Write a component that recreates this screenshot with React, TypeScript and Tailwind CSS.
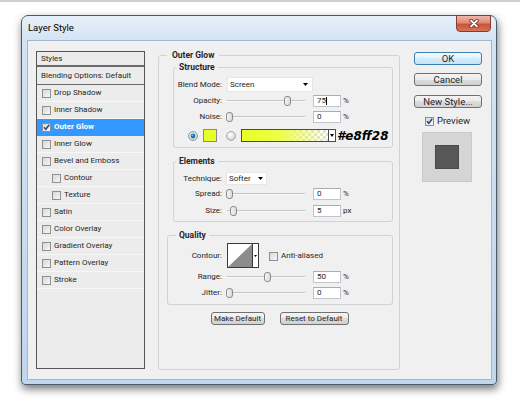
import React from "react";

function Tri({ w = 5, h = 3 }: { w?: number; h?: number }) {
  return (
    <svg width={w} height={h} viewBox={`0 0 ${w} ${h}`} className="block">
      <path d={`M0 0H${w}L${w / 2} ${h}Z`} fill="#000" />
    </svg>
  );
}

function Checkbox({ checked = false }: { checked?: boolean }) {
  return (
    <span className="relative inline-flex items-center justify-center w-[9px] h-[9px] border border-[#8e8f8f] bg-[linear-gradient(135deg,#d8d8d8,#f6f6f6)] shrink-0">
      {checked && (
        <svg width="9" height="9" viewBox="0 0 9 9" className="absolute -left-px -top-px">
          <path d="M2 4.3 L3.8 6.3 L7.2 1.8" stroke="#27477e" strokeWidth="1.5" fill="none" />
        </svg>
      )}
    </span>
  );
}

function Field({ value, caret = false }: { value: string; caret?: boolean }) {
  return (
    <div className="w-[28px] h-[12px] bg-white border border-[#c0c4cc] border-t-[#a8acb4] flex items-center pl-[3px] text-[8px] leading-none">
      {value}
      {caret && <span className="w-px h-[8px] bg-black" />}
    </div>
  );
}

function Slider({ thumb }: { thumb: number }) {
  return (
    <div className="relative w-[78px] h-full">
      <div className="absolute left-0 right-0 top-1/2 -mt-px h-[2px] bg-[#c4c4c4] border-b border-[#f8f8f8]" />
      <div
        className="absolute top-1/2 -mt-[5px] w-[7px] h-[10px] rounded-[3px] border border-[#8a8a8a] bg-[linear-gradient(to_right,#f6f6f6,#dadada)]"
        style={{ left: thumb }}
      />
    </div>
  );
}

function Label({ children, w = "w-[44px]" }: { children: React.ReactNode; w?: string }) {
  return (
    <span className={`${w} flex justify-end whitespace-nowrap text-[8px] leading-none shrink-0`}>{children}</span>
  );
}

function SliderRow({
  label,
  thumb,
  value,
  unit,
  caret,
  pad,
}: {
  label: string;
  thumb: number;
  value: string;
  unit: string;
  caret?: boolean;
  pad: string;
}) {
  return (
    <div className={`flex items-center h-[12px] ${pad}`}>
      <Label>{label}</Label>
      <div className="ml-[5px] h-full">
        <Slider thumb={thumb} />
      </div>
      <div className="ml-[8px]">
        <Field value={value} caret={caret} />
      </div>
      <span className="ml-[2px] text-[8px] leading-none">{unit}</span>
    </div>
  );
}

function Radio({ on = false }: { on?: boolean }) {
  return (
    <svg width="10" height="10" viewBox="0 0 10 10" className="block">
      <defs>
        <radialGradient id={on ? "rg1" : "rg2"} cx="0.4" cy="0.35" r="0.7">
          <stop offset="0" stopColor="#ffffff" />
          <stop offset="1" stopColor={on ? "#c8d8e4" : "#d2d2d2"} />
        </radialGradient>
      </defs>
      <circle cx="5" cy="5" r="4.4" fill={`url(#${on ? "rg1" : "rg2"})`} stroke={on ? "#6d8aa2" : "#9c9c9c"} strokeWidth="0.9" />
      {on && <circle cx="5" cy="5" r="2.4" fill="#1f6f9e" />}
      {on && <circle cx="4.4" cy="4.3" r="0.9" fill="#7fc2e6" />}
    </svg>
  );
}

function Group({
  title,
  children,
  className,
  legendClass,
}: {
  title: string;
  children: React.ReactNode;
  className: string;
  legendClass: string;
}) {
  return (
    <fieldset className={`border border-[#d2d2d2] rounded-[3px] p-0 m-0 ${className}`}>
      <legend className={`text-[8.5px] leading-[10px] font-bold ${legendClass}`}>{title}</legend>
      {children}
    </fieldset>
  );
}

function WinButton({
  label,
  w,
  def = false,
  h = "h-[13px]",
  text = "text-[9.5px]",
}: {
  label: string;
  w: string;
  def?: boolean;
  h?: string;
  text?: string;
}) {
  return (
    <div
      className={`${w} ${h} ${text} rounded-[3px] border flex items-center justify-center leading-none whitespace-nowrap ${
        def
          ? "border-[#3c7fb1] bg-[linear-gradient(to_bottom,#f1f9fe,#e2f2fc_50%,#d3ebfa_50%,#c4e4f8)]"
          : "border-[#707070] bg-[linear-gradient(to_bottom,#f4f4f4,#ebebeb_50%,#dddddd_50%,#d0d0d0)]"
      }`}
    >
      {label}
    </div>
  );
}

const items: { label: string; indent?: boolean; active?: boolean }[] = [
  { label: "Drop Shadow" },
  { label: "Inner Shadow" },
  { label: "Outer Glow", active: true },
  { label: "Inner Glow" },
  { label: "Bevel and Emboss" },
  { label: "Contour", indent: true },
  { label: "Texture", indent: true },
  { label: "Satin" },
  { label: "Color Overlay" },
  { label: "Gradient Overlay" },
  { label: "Pattern Overlay" },
  { label: "Stroke" },
];

function StylesPanel() {
  return (
    <div className="mt-[1px] w-[109px] h-[318px] border border-[#555] bg-[#ececec] flex flex-col text-[8px] leading-none shrink-0">
      <div className="h-[15px] flex items-center pl-[4px] border-b-2 border-[#6b6b6b]">Styles</div>
      <div className="h-[18px] flex items-center pl-[4px] border-b border-[#6b6b6b] whitespace-nowrap">
        Blending Options: Default
      </div>
      {items.map((it) => (
        <div
          key={it.label}
          className={`h-[17px] flex items-center gap-[3px] border-b ${
            it.active ? "bg-[#3399ff] text-white font-bold border-[#3399ff]" : "border-[#f7f7f7]"
          } ${it.indent ? "pl-[15px]" : "pl-[5px]"}`}
        >
          <Checkbox checked={it.active} />
          <span>{it.label}</span>
        </div>
      ))}
    </div>
  );
}

function OuterGlow() {
  return (
    <Group title="Outer Glow" className="ml-[13px] w-[242px] h-[320px] shrink-0" legendClass="ml-[8px] px-[5px]">
      <Group title="Structure" className="ml-[14px] mt-[2px] w-[220px] pb-[5px]" legendClass="ml-[2px] px-[3px]">
        <div className="flex items-center h-[15px] mt-[5px] pl-[4px]">
          <Label>Blend Mode:</Label>
          <div className="ml-[5px] w-[86px] h-full bg-white border border-[#e6e6e6] flex items-center justify-between pl-[2px] pr-[4px] text-[8px] leading-none">
            <span>Screen</span>
            <Tri />
          </div>
        </div>
        <div className="mt-[3px]">
          <SliderRow label="Opacity:" thumb={57} value="75" unit="%" caret pad="pl-[4px]" />
        </div>
        <div className="mt-[4px]">
          <SliderRow label="Noise:" thumb={-1} value="0" unit="%" pad="pl-[4px]" />
        </div>
        <div className="mt-[6px] h-[13px] flex items-center pl-[14px]">
          <Radio on />
          <div className="ml-[5px] w-[14px] h-[13px] bg-[#e8ff28] border border-[#8a8a8a]" />
          <div className="ml-[9px]">
            <Radio />
          </div>
          <div className="ml-[5px] h-[13px] flex border border-[#4a4a4a]">
            <div className="w-[86px] h-full bg-[repeating-conic-gradient(#dedede_0%_25%,#ffffff_0%_50%)] bg-[length:6px_6px]">
              <div className="w-full h-full bg-[linear-gradient(to_right,#e8ff28,#ecff48_45%,rgba(232,255,40,0))]" />
            </div>
            <div className="w-[7px] h-full bg-white border-l border-[#4a4a4a] flex items-center justify-center">
              <Tri w={4} h={3} />
            </div>
          </div>
          <span className="ml-[1px] text-[12px] leading-none font-bold italic text-black font-['DejaVu_Sans',Verdana,sans-serif] whitespace-nowrap">
            #e8ff28
          </span>
        </div>
      </Group>

      <Group title="Elements" className="ml-[14px] mt-[8px] w-[220px] pb-[4px]" legendClass="ml-[2px] px-[3px]">
        <div className="flex items-center h-[13px] mt-[6px] pl-[4px]">
          <Label>Technique:</Label>
          <div className="ml-[4px] w-[41px] h-full bg-white border border-[#e6e6e6] flex items-center justify-between pl-[2px] pr-[3px] text-[8px] leading-none">
            <span>Softer</span>
            <Tri />
          </div>
        </div>
        <div className="mt-[3px]">
          <SliderRow label="Spread:" thumb={-1} value="0" unit="%" pad="pl-[4px]" />
        </div>
        <div className="mt-[5px]">
          <SliderRow label="Size:" thumb={3} value="5" unit="px" pad="pl-[4px]" />
        </div>
      </Group>

      <Group title="Quality" className="ml-[8px] mt-[8px] w-[226px] pb-[5px]" legendClass="ml-[8px] px-[3px]">
        <div className="flex items-center h-[25px] mt-[3px] pl-[10px]">
          <Label>Contour:</Label>
          <div className="ml-[5px] h-full flex border border-[#3a3a3a]">
            <svg width="24" height="23" viewBox="0 0 24 23" className="block bg-white">
              <polygon points="0,23 24,0 24,23" fill="#8c8c8c" />
            </svg>
            <div className="w-[6px] h-full bg-white border-l border-[#3a3a3a] flex items-center justify-center">
              <Tri w={3} h={2} />
            </div>
          </div>
          <div className="ml-[10px]">
            <Checkbox />
          </div>
          <span className="ml-[3px] text-[8px] leading-none">Anti-aliased</span>
        </div>
        <div className="mt-[3px]">
          <SliderRow label="Range:" thumb={37} value="50" unit="%" pad="pl-[10px]" />
        </div>
        <div className="mt-[4px]">
          <SliderRow label="Jitter:" thumb={-1} value="0" unit="%" pad="pl-[10px]" />
        </div>
      </Group>

      <div className="mt-[7px] flex justify-center gap-[15px] pl-[1px]">
        <WinButton label="Make Default" w="w-[54px]" text="text-[8px]" />
        <WinButton label="Reset to Default" w="w-[69px]" text="text-[8px]" />
      </div>
    </Group>
  );
}

function RightColumn() {
  return (
    <div className="ml-[14px] mt-[2px] w-[68px] flex flex-col shrink-0">
      <WinButton label="OK" w="w-[68px]" def />
      <div className="mt-[8px]">
        <WinButton label="Cancel" w="w-[68px]" />
      </div>
      <div className="mt-[9px]">
        <WinButton label="New Style..." w="w-[68px]" />
      </div>
      <div className="mt-[7px] h-[12px] flex items-center pl-[11px] gap-[3px]">
        <Checkbox checked />
        <span className="text-[9.5px] leading-none">Preview</span>
      </div>
      <div className="mt-[5px] ml-[8px] w-[50px] h-[50px] bg-[#d5d5d5] border border-[#c9c9c9] flex items-center justify-center">
        <div className="w-[24px] h-[24px] bg-[#575757] border border-[#4a4a4a]" />
      </div>
    </div>
  );
}

function CloseButton() {
  return (
    <div className="w-[35px] h-[17px] -mt-px rounded-b-[4px] border border-[#8a3a2a] bg-[linear-gradient(to_bottom,#efb8aa,#de8a74_45%,#cc5236_55%,#d87456)] flex items-center justify-center">
      <svg width="10" height="9" viewBox="0 0 10 9" className="block">
        <path d="M2 1.5 L8 7.5 M8 1.5 L2 7.5" stroke="#5a1a10" strokeWidth="3.2" strokeLinecap="round" />
        <path d="M2 1.5 L8 7.5 M8 1.5 L2 7.5" stroke="#ffffff" strokeWidth="1.8" strokeLinecap="round" />
      </svg>
    </div>
  );
}

export default function App() {
  return (
    <div className="w-[520px] h-[403px] bg-white border-t-2 border-[#cfcfcf] overflow-hidden font-['Roboto','Liberation_Sans',Arial,sans-serif] text-[#262626]">
      <div className="ml-[21px] mt-[13px] w-[476px] h-[370px] border border-[#4a5a6e] rounded-t-[7px] rounded-b-[4px] bg-[linear-gradient(to_bottom,#e6f0fa,#d3e3f3_7%,#c0d6ec)] shadow-[1px_4px_9px_rgba(0,0,0,0.55)] flex flex-col">
        <div className="h-[24px] flex items-start justify-between pl-[6px] pr-[5px] shrink-0">
          <span className="text-[9.5px] leading-[24px] text-black">Layer Style</span>
          <CloseButton />
        </div>
        <div className="flex-1 ml-[5px] mr-[4px] mb-[4px] bg-[#f0f0f0] border border-[#a3b8cf] flex items-start pl-[8px] pt-[9px]">
          <StylesPanel />
          <OuterGlow />
          <RightColumn />
        </div>
      </div>
    </div>
  );
}
